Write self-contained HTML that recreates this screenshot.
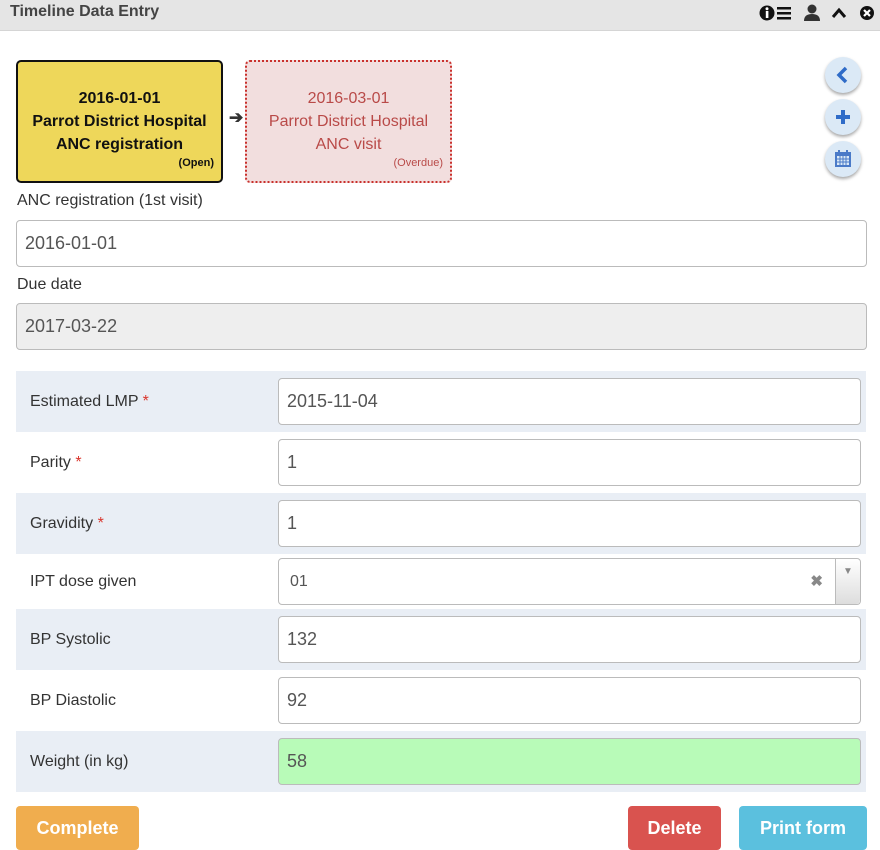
<!DOCTYPE html>
<html><head><meta charset="utf-8"><style>
*{box-sizing:border-box}
body{margin:0;width:880px;height:850px;overflow:hidden;font-family:"Liberation Sans",sans-serif;background:#fff;color:#333}
.hdr{position:absolute;left:0;top:0;width:880px;height:31px;background:#e5e5e5;border-bottom:1px solid #d5d5d5}
.hdr .t{position:absolute;left:10px;top:3px;font-size:16px;font-weight:bold;color:#444}
.box{position:absolute;top:60px;width:207px;height:123px;border-radius:5px;text-align:center;font-size:16px;line-height:23px;padding-top:25px}
.b1{left:16px;background:#eed75a;border:2px solid #111;font-weight:bold;color:#111}
.b2{left:245px;background:#f2dede;border:2px dotted #c9302c;color:#b94a48}
.st{position:absolute;right:7px;bottom:12px;font-size:11px;line-height:12px}
.arr{position:absolute;left:229px;top:108px;font-size:17px;font-weight:bold;color:#333}
.cb{position:absolute;left:825px;width:36px;height:36px;border-radius:50%;background:#dbe9f6;box-shadow:0 2px 3px rgba(0,0,0,.35);color:#2f6cc8;text-align:center}
.lbl{position:absolute;left:17px;font-size:16px;color:#333}
.inp{position:absolute;border:1px solid #bbb;border-radius:4px;font-size:18px;color:#555;padding-left:8px;background:#fff}
.row{position:absolute;left:16px;width:850px;height:61px}
.row.s{background:#e9eef5}
.row .l{position:absolute;left:14px;top:22px;font-size:16px;color:#333}
.req{color:#d9342b}
.row .inp{left:262px;top:7px;width:583px;height:47px;line-height:45px}
.btn{position:absolute;top:806px;height:44px;border-radius:4px;color:#fff;font-weight:bold;font-size:18px;text-align:center;line-height:44px}
</style></head><body>
<div class="hdr"><div class="t">Timeline Data Entry</div>
<svg style="position:absolute;left:758px;top:4px" width="118" height="18" viewBox="0 0 118 18">
<circle cx="9" cy="9" r="7.5" fill="#111"/><rect x="7.8" y="7" width="2.6" height="7" fill="#fff"/><circle cx="9" cy="4.7" r="1.5" fill="#fff"/>
<rect x="19" y="3" width="14" height="2.5" fill="#111"/><rect x="19" y="8" width="14" height="2.5" fill="#111"/><rect x="19" y="13" width="14" height="2.5" fill="#111"/>
<circle cx="54" cy="5" r="4.5" fill="#333"/><path d="M46 17 Q46 10 54 10 Q62 10 62 17Z" fill="#333"/>
<path d="M75 13 L81 6 L87 13" stroke="#111" stroke-width="3" fill="none"/>
<circle cx="109" cy="9" r="7" fill="#111"/><path d="M106 6 L112 12 M112 6 L106 12" stroke="#fff" stroke-width="2.2"/>
</svg></div>
<div class="box b1">2016-01-01<br>Parrot District Hospital<br>ANC registration<div class="st">(Open)</div></div>
<div class="arr">➔</div>
<div class="box b2">2016-03-01<br>Parrot District Hospital<br>ANC visit<div class="st">(Overdue)</div></div>
<div class="cb" style="top:57px"><svg width="36" height="36"><path d="M21 11 L14 18 L21 25" stroke="#2f6cc8" stroke-width="3.5" fill="none"/></svg></div>
<div class="cb" style="top:99px"><svg width="36" height="36"><path d="M18 11 V25 M11 18 H25" stroke="#2f6cc8" stroke-width="4" fill="none"/></svg></div>
<div class="cb" style="top:141px"><svg width="36" height="36"><rect x="10" y="11" width="16" height="15" fill="#4a7ac8"/><rect x="12" y="15" width="12" height="9" fill="#dbe9f6"/><path d="M12 18H24M12 21H24M15 15V24M18 15V24M21 15V24" stroke="#4a7ac8" stroke-width="1"/><rect x="13" y="9" width="2" height="4" fill="#4a7ac8"/><rect x="21" y="9" width="2" height="4" fill="#4a7ac8"/></svg></div>
<div class="lbl" style="top:192px">ANC registration (1st visit)</div>
<div class="inp" style="left:16px;top:220px;width:851px;height:47px;line-height:45px">2016-01-01</div>
<div class="lbl" style="top:276px">Due date</div>
<div class="inp" style="left:16px;top:303px;width:851px;height:47px;line-height:45px;background:#eee">2017-03-22</div>
<div class="row s" style="top:371px"><div class="l">Estimated LMP <span class="req">*</span></div><div class="inp">2015-11-04</div></div>
<div class="row" style="top:432px"><div class="l">Parity <span class="req">*</span></div><div class="inp">1</div></div>
<div class="row s" style="top:493px"><div class="l">Gravidity <span class="req">*</span></div><div class="inp">1</div></div>
<div class="row" style="top:554px;height:55px"><div class="l" style="top:19px">IPT dose given</div>
<div class="inp" style="top:4px;height:47px;line-height:45px;font-size:16px;padding-left:11px">01
<span style="position:absolute;right:37px;top:0;color:#888;font-weight:bold;font-size:15px">✖</span>
<span style="position:absolute;right:0;top:0;width:25px;height:45px;border-left:1px solid #bbb;background:linear-gradient(#fff,#ddd);border-radius:0 4px 4px 0;color:#888;font-size:10px;text-align:center;line-height:26px">▼</span></div></div>
<div class="row s" style="top:609px"><div class="l">BP Systolic</div><div class="inp">132</div></div>
<div class="row" style="top:670px"><div class="l">BP Diastolic</div><div class="inp">92</div></div>
<div class="row s" style="top:731px"><div class="l">Weight (in kg)</div><div class="inp" style="background:#b8fbb8">58</div></div>
<div class="btn" style="left:16px;width:123px;background:#f0ad4e">Complete</div>
<div class="btn" style="left:628px;width:93px;background:#d9534f">Delete</div>
<div class="btn" style="left:739px;width:128px;background:#5bc0de">Print form</div>
</body></html>
